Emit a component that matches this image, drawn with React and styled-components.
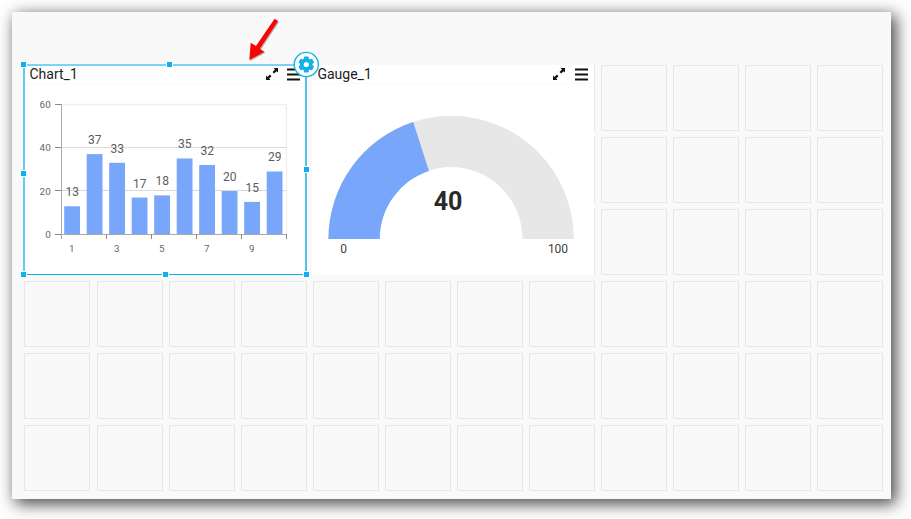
import React from "react";
import styled, { createGlobalStyle } from "styled-components";

const Global = createGlobalStyle`
  body { margin: 0; background: #fff; font-family: Roboto, sans-serif; overflow: hidden; }
  * { box-sizing: border-box; }
`;

const Page = styled.div`
  width: 911px;
  height: 519px;
  padding: 12px 20px 20px 12px;
`;

const Dashboard = styled.main`
  position: relative;
  width: 879px;
  height: 487px;
  padding: 53px 7.55px 8px 12.45px;
  background: #f9f9f9;
  box-shadow: 4px 4px 15px 1px rgba(0, 0, 0, 0.72);
`;

const Grid = styled.div`
  display: grid;
  grid-template-columns: repeat(12, 66px);
  grid-template-rows: repeat(6, 66px);
  justify-content: space-between;
  row-gap: 6px;
`;

const Cell = styled.div`
  grid-column: ${(p) => p.$col};
  grid-row: ${(p) => p.$row};
  border: 1px solid #e6e6e6;
`;

const Widget = styled.section`
  position: relative;
  grid-column: ${(p) => p.$col} / span 4;
  grid-row: 1 / span 3;
  width: 282px;
  height: 210px;
  margin-left: ${(p) => p.$shift}px;
  background: #fff;
  display: flex;
  flex-direction: column;
`;

const WidgetHeader = styled.header`
  display: flex;
  align-items: center;
  gap: 9.5px;
  height: 19px;
  flex: none;
  padding: 0 6px 0 5.5px;
  border-bottom: 1px solid #f9f9f9;
  color: #111;
`;

const Title = styled.h2`
  flex: 1;
  margin: 0;
  font-size: 14px;
  line-height: 18px;
  font-weight: 400;
  color: #1d1d1d;
`;

const Icon = styled.svg`
  display: block;
  flex: none;
`;

const Drawing = styled.svg`
  display: block;
  width: 282px;
  height: 191px;
  overflow: visible;
`;

const TickLabel = styled.text`
  font: 9.8px Roboto, sans-serif;
  letter-spacing: 0.15px;
  fill: #666;
  text-anchor: ${(p) => p.$anchor || "middle"};
`;

const ValueLabel = styled.text`
  font: 12px Roboto, sans-serif;
  fill: ${(p) => p.$color || "#5c5c5c"};
  text-anchor: middle;
`;

const GaugeValue = styled.text`
  font: 700 25px Roboto, sans-serif;
  fill: #292929;
  text-anchor: middle;
`;

const Selection = styled.div`
  position: absolute;
  left: -1px;
  top: -1px;
  width: 284px;
  height: 211px;
  border-style: solid;
  border-width: 2px 2px 1px 2px;
  border-color: #7ad3f3 #4fc5ee #00b0f0 #5ecdf5;
  pointer-events: none;
`;

const Handle = styled.i`
  position: absolute;
  left: ${(p) => p.$x}px;
  top: ${(p) => p.$y}px;
  width: 7px;
  height: 7px;
  background: #0eb1ee;
  border: 1px solid #fff;
`;

const Settings = styled.svg`
  position: absolute;
  left: 269px;
  top: -14px;
  z-index: 3;
`;

const Pointer = styled.svg`
  position: absolute;
  left: 232px;
  top: 2px;
`;

const cells = Array.from({ length: 72 }, (_, i) => ({ col: (i % 12) + 1, row: Math.floor(i / 12) + 1 }));
const values = [13, 37, 33, 17, 18, 35, 32, 20, 15, 29];
const handles = [[-4, -4], [142, -4], [-4, 105], [279, 101], [-4, 206], [138, 206], [279, 206]];
const scale = (v) => 150.5 - v * 2.173;
const arrow = "M30.6 4.8l3.4 2.1L15.8 34.7l4.5 3L5.3 46 6.7 28.7l5.3 3.2z";

const Header = ({ title }) => (
  <WidgetHeader>
    <Title>{title}</Title>
    <Icon width="12" height="12" viewBox="0 0 12 12" fill="currentColor">
      <path d="M7 0h5v5l-1.6-1.6-2.7 2.7-1.7-1.7 2.7-2.7z" transform="translate(1 0) scale(.92)" />
      <path d="M0 7v5h5L3.4 10.4 6 7.8 4.3 6 1.6 8.7z" transform="translate(0 1) scale(.92)" />
      <path d="M4.4 6.2l1.6 1.6" stroke="#fff" strokeWidth=".5" />
    </Icon>
    <Icon width="13" height="13" viewBox="0 0 13 13" fill="currentColor">
      <path d="M0 .4h13v2H0zM0 5.4h13v2H0zM0 10.4h13v2H0z" />
    </Icon>
  </WidgetHeader>
);

const BarChart = () => (
  <Drawing viewBox="0 0 282 191">
    <path d="M37 20.5h225.5v130" fill="none" stroke="#efefef" strokeWidth="1.3" />
    {[20, 40].map((v) => (
      <path key={v} d={`M37 ${Math.round(scale(v)) - 0.5}h225.5`} stroke="#dadada" />
    ))}
    {values.map((v, i) => (
      <rect key={i} x={40.2 + i * 22.5} y={scale(v)} width="15.8" height={150 - scale(v)} fill="#77a6fb" />
    ))}
    <path d="M37.5 20v135M37 150.5h226" fill="none" stroke="#aaa" />
    {[0, 20, 40, 60].map((v) => (
      <React.Fragment key={v}>
        <path d={`M31 ${Math.round(scale(v) + 0.4) - 0.5}h6`} stroke="#888" />
        <TickLabel x="26.9" y={scale(v) + 3.7} $anchor="end">{v}</TickLabel>
      </React.Fragment>
    ))}
    {[82.5, 127.5, 172.5, 217.5, 262.5].map((x) => (
      <path key={x} d={`M${x} 150v5`} stroke="#888" />
    ))}
    {[1, 3, 5, 7, 9].map((v) => (
      <TickLabel key={v} x={47.8 + (v - 1) * 22.5} y="168">{v}</TickLabel>
    ))}
    {values.map((v, i) => (
      <ValueLabel key={i} x={48.2 + i * 22.5} y={scale(v) - 10}>{v}</ValueLabel>
    ))}
  </Drawing>
);

const Gauge = () => (
  <Drawing viewBox="0 0 282 191">
    <path d="M16.4 155a122.7 123.3 0 0 1 245.4 0h-51.3a71.4 71.9 0 0 0-142.8 0z" fill="#e7e7e7" />
    <path d="M16.4 155A122.7 123.3 0 0 1 101.2 38L117 86.9A71.4 71.9 0 0 0 67.7 155z" fill="#77a6fb" />
    <GaugeValue x="136" y="126">40</GaugeValue>
    <ValueLabel $color="#414141" x="31.7" y="169">0</ValueLabel>
    <ValueLabel $color="#414141" x="246" y="169">100</ValueLabel>
  </Drawing>
);

export default function App() {
  return (
    <>
      <Global />
      <Page>
        <Dashboard>
          <Grid>
            {cells.map((c) => (
              <Cell key={`${c.col}-${c.row}`} $col={c.col} $row={c.row} />
            ))}
            <Widget $col={1} $shift={-0.45}>
              <Header title="Chart_1" />
              <BarChart />
              <Selection />
              {handles.map(([x, y]) => (
                <Handle key={`${x},${y}`} $x={x} $y={y} />
              ))}
              <Settings width="27" height="27" viewBox="0 0 27 27">
                <circle cx="13.3" cy="13.5" r="12.1" fill="#fff" stroke="#18b2e9" strokeWidth="1.4" />
                <g transform="translate(13.3 13.5)" fill="#12b0ec">
                  <circle r="6.2" />
                  {[0, 60, 120].map((a) => (
                    <rect key={a} x="-2.5" y="-7.9" width="5" height="15.8" rx="1.2" transform={`rotate(${a})`} />
                  ))}
                  <circle r="2.6" fill="#fff" />
                </g>
              </Settings>
            </Widget>
            <Widget $col={5} $shift={-0.8}>
              <Header title="Gauge_1" />
              <Gauge />
            </Widget>
          </Grid>
          <Pointer width="38" height="52" viewBox="0 0 38 52">
            <path d={arrow} fill="#777" opacity=".6" transform="translate(1 1)" />
            <path d={arrow} fill="#f90303" />
          </Pointer>
        </Dashboard>
      </Page>
    </>
  );
}
